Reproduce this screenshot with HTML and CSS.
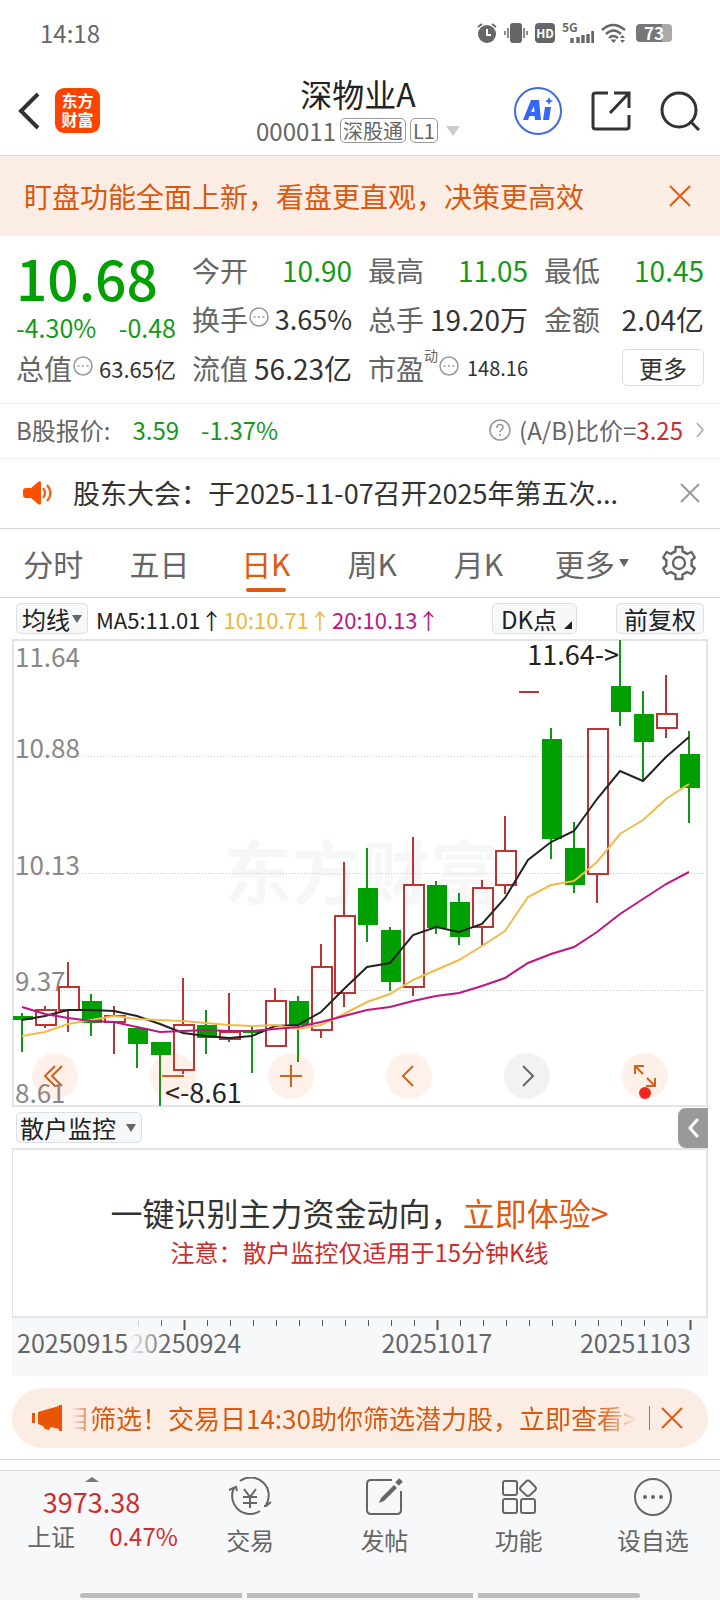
FILE: index.html
```html
<!DOCTYPE html>
<html lang="zh-CN">
<head>
  <meta charset="UTF-8">
  <meta name="viewport" content="width=device-width, initial-scale=1.0">
  <title>深物业A 000011</title>
  <link rel="stylesheet" href="styles.css">
</head>
<body>
  <div class="status-bar">
    <span class="time">14:18</span>
    <div class="status-icons">
      <svg width="20" height="20" viewBox="0 0 20 20"><circle cx="10" cy="11" r="9" fill="#666"/><path d="M1 4l4-3M19 4l-4-3" stroke="#666" stroke-width="2"/><path d="M10 6v6h4" fill="none" stroke="#fff" stroke-width="2"/></svg>
      <svg width="24" height="20" viewBox="0 0 24 20"><rect x="6" width="12" height="20" rx="3" fill="#666"/><path d="M1 8v4M4 5v10M20 5v10M23 8v4" stroke="#666" stroke-width="1.5"/></svg>
      <span class="hd">HD</span>
      <div class="signal">
        <span class="net">5G</span>
        <svg width="24" height="12" viewBox="0 0 24 12"><path d="M2 7v5M8 6v6M13 4v8M18 3v9M23 0v12" stroke="#666" stroke-width="3.4"/></svg>
      </div>
      <svg width="26" height="20" viewBox="0 0 26 20"><g fill="none" stroke="#666" stroke-width="2.4"><path d="M1 7Q12-3 24 7M5 11q7.500-7 15 0M8 15q4-4 9 0"/></g><path d="M9.500 16.500h6l-3 3.500zM19 15l2.500-3 2.500 3zM19 17h5l-2.500 3z" fill="#666"/></svg>
      <span class="battery">73</span>
    </div>
  </div>

  <header class="header">
    <div class="header-left">
      <button class="icon-btn" aria-label="返回"><svg width="24" height="38" viewBox="0 0 24 38"><path d="M22 2L5 19l17 17" fill="none" stroke="#333" stroke-width="4"/></svg></button>
      <a class="logo" href="#"><span>东方</span><span>财富</span></a>
    </div>
    <div class="stock">
      <h1>深物业A</h1>
      <div class="code">000011<span class="tag">深股通</span><span class="tag">L1</span><i class="arrow-light"></i></div>
    </div>
    <div class="header-right">
      <button class="icon-btn" aria-label="Ai">
        <svg width="48" height="48" viewBox="0 0 48 48"><circle cx="24" cy="24" r="23" fill="#fff" stroke="#3c6ae0" stroke-width="2"/><path d="M9 33L17 13h8l2 20h-6l-.5-4h-5L14 33zM17 25h3.500l-.5-6zM31 20h6l-2 13h-6z" fill="#3566f5"/><path d="M35 10l1.200 2.800L39 14l-2.800 1.200L35 18l-1.200-2.800L31 14l2.800-1.200z" fill="#3566f5"/></svg>
      </button>
      <button class="icon-btn" aria-label="分享">
        <svg width="40" height="40" viewBox="0 0 40 40" fill="none" stroke="#333" stroke-width="3"><path d="M17 2H4.500Q2 2 2 4.500V35.500Q2 38 4.500 38h31Q38 38 38 35.500V24"/><path d="M23 2h15v15M38 2L19 22"/></svg>
      </button>
      <button class="icon-btn" aria-label="搜索">
        <svg width="40" height="40" viewBox="0 0 40 40" fill="none" stroke="#333" stroke-width="3"><circle cx="19" cy="19" r="17"/><path d="M30 30l9 9"/></svg>
      </button>
    </div>
  </header>

  <div class="banner">
    <span>盯盘功能全面上新，看盘更直观，决策更高效</span>
    <button class="icon-btn" aria-label="关闭"><svg width="22" height="22" viewBox="0 0 22 22"><path d="M1 1l20 20M21 1L1 21" stroke="#e05a10" stroke-width="2"/></svg></button>
  </div>

  <section class="quote">
    <div class="price-box">
      <strong class="price">10.68</strong>
      <div class="change"><span>-4.30%</span><span>-0.48</span></div>
    </div>
    <div class="item"><span>今开</span><b class="green">10.90</b></div>
    <div class="item"><span>最高</span><b class="green">11.05</b></div>
    <div class="item"><span>最低</span><b class="green">10.45</b></div>
    <div class="item"><span>换手</span><svg class="dots" viewBox="0 0 20 20"><circle cx="10" cy="10" r="9"/><path d="M4.500 10h2M9 10h2M13.500 10h2"/></svg><b class="mid">3.65%</b></div>
    <div class="item"><span>总手</span><b>19.20万</b></div>
    <div class="item"><span>金额</span><b>2.04亿</b></div>
    <div class="item"><span>总值</span><svg class="dots" viewBox="0 0 20 20"><circle cx="10" cy="10" r="9"/><path d="M4.500 10h2M9 10h2M13.500 10h2"/></svg><b class="small">63.65亿</b></div>
    <div class="item"><span>流值</span><b>56.23亿</b></div>
    <div class="item"><span>市盈</span><sup>动</sup><svg class="dots" viewBox="0 0 20 20"><circle cx="10" cy="10" r="9"/><path d="M4.500 10h2M9 10h2M13.500 10h2"/></svg><b class="tiny">148.16</b></div>
    <div class="item"><button class="more">更多</button></div>
  </section>

  <a class="b-share" href="#">
    <span>B股报价:</span>
    <span class="green">3.59</span>
    <span class="green">-1.37%</span>
    <svg class="help" width="22" height="22" viewBox="0 0 22 22" fill="none" stroke="#999" stroke-width="1.6"><circle cx="11" cy="11" r="10"/><path d="M8 9q0-3.500 3-3.500t3 2.800q0 1.500-1.500 2.500T11 13.200M11 15v2"/></svg>
    <span>(A/B)比价=<em>3.25</em></span>
    <svg class="chevron" width="8" height="16" viewBox="0 0 8 16"><path d="M1 1l6 7-6 7" fill="none" stroke="#aaa" stroke-width="1.6"/></svg>
  </a>

  <div class="news">
    <svg width="30" height="24" viewBox="0 0 30 24"><path d="M3 7h5l7-6q3-2 3 1v20q0 3-3 1l-7-6H3q-3 0-3-3v-4q0-3 3-3z" fill="#ff5000"/><path d="M20 7q4 5 0 10M24 4q7 8 0 16" fill="none" stroke="#f26722" stroke-width="2.400"/></svg>
    <a href="#">股东大会：于2025-11-07召开2025年第五次...</a>
    <button class="icon-btn" aria-label="关闭"><svg width="20" height="20" viewBox="0 0 20 20"><path d="M1 1l18 18M19 1L1 19" stroke="#999" stroke-width="2"/></svg></button>
  </div>

  <nav class="tabs">
    <button>分时</button>
    <button>五日</button>
    <button class="active">日K</button>
    <button>周K</button>
    <button>月K</button>
    <button class="tab-more">更多<i class="arrow"></i></button>
    <button class="gear" aria-label="设置"><svg width="36" height="36" viewBox="0 0 36 36" fill="none" stroke="#666" stroke-width="2.400"><path d="M14.500 2h7v4.500q2.500.8 4.500 2.500l4.500-2 3.300 5.500-3.300 3q.5 2.500 0 5l3.300 3-3.300 5.500-4.500-2q-2 1.700-4.500 2.500V34h-7v-4.500Q12 28.700 10 27l-4.500 2-3.300-5.500 3.300-3q-.5-2.500 0-5l-3.300-3L5.500 7 10 9q2-1.700 4.500-2.500z" stroke-linejoin="round"/><circle cx="18" cy="18" r="6"/></svg></button>
  </nav>

  <div class="ma-bar">
    <button class="chip">均线<i class="arrow"></i></button>
    <div class="ma"><span>MA5:11.01↑</span><span class="ma10">10:10.71↑</span><span class="ma20">20:10.13↑</span></div>
    <button class="chip dk">DK点<svg width="8" height="8" viewBox="0 0 8 8"><path d="M8 0v8H0z" fill="#222"/></svg></button>
    <button class="chip">前复权</button>
  </div>

  <div class="chart">
    <svg class="kline" viewBox="12 639 696 468">
      <text class="watermark" x="223" y="899">东方财富</text>
      <path class="grid" d="M13 756.500H707M13 873.500H707M13 990.500H707"/>
      <rect class="frame" x="13" y="640" width="694" height="466"/>
      <g class="axis">
        <text x="15" y="667">11.64</text>
        <text x="15" y="758">10.88</text>
        <text x="15" y="875">10.13</text>
        <text x="15" y="991">9.37</text>
        <text x="15" y="1103">8.61</text>
      </g>
      <g id="candles"></g>
      <g id="lines"></g>
      <text class="mark" x="619" y="665" text-anchor="end">11.64-&gt;</text>
      <text class="mark" x="165" y="1103">&lt;-8.61</text>
    </svg>
    <div class="chart-tools">
      <button aria-label="最早"><svg width="26" height="24" viewBox="0 0 26 24"><path d="M13 2L3 12l10 10M20 2L10 12l10 10"/></svg></button>
      <button aria-label="缩小"><svg width="24" height="24" viewBox="0 0 24 24"><path d="M1 12h22"/></svg></button>
      <button aria-label="放大"><svg width="24" height="24" viewBox="0 0 24 24"><path d="M1 12h22M12 1v22"/></svg></button>
      <button aria-label="向左"><svg width="24" height="24" viewBox="0 0 24 24"><path d="M16 2L6 12l10 10"/></svg></button>
      <button class="disabled" aria-label="向右"><svg width="24" height="24" viewBox="0 0 24 24"><path d="M8 2l10 10L8 22"/></svg></button>
      <button class="full" aria-label="全屏"><svg width="24" height="24" viewBox="0 0 24 24"><path d="M2 10V2h9M2 2l8 8M22 14v8h-9M22 22l-8-8"/></svg></button>
    </div>
  </div>

  <div class="sub-bar">
    <button class="chip">散户监控<i class="arrow"></i></button>
    <button class="fold" aria-label="展开"><svg width="12" height="20" viewBox="0 0 12 20"><path d="M10 2L3 10l7 8" fill="none" stroke="#fff" stroke-width="3" stroke-linecap="round"/></svg></button>
  </div>

  <div class="panel">
    <p class="panel-title">一键识别主力资金动向，<a href="#">立即体验&gt;</a></p>
    <p class="panel-note">注意：散户监控仅适用于15分钟K线</p>
  </div>
  <svg class="dates" viewBox="12 1318 696 58">
    <defs>
      <linearGradient id="fade"><stop offset="0" stop-color="#f7f8fa"/><stop offset="1" stop-color="#f7f8fa" stop-opacity="0"/></linearGradient>
    </defs>
    <g id="ticks"></g>
    <text x="130" y="1353">20250924</text>
    <rect x="129" y="1320" width="38" height="40" fill="url(#fade)"/>
    <text x="17" y="1353">20250915</text>
    <text x="437" y="1353" text-anchor="middle">20251017</text>
    <text x="691" y="1353" text-anchor="end">20251103</text>
  </svg>

  <div class="promo">
    <svg width="32" height="28" viewBox="0 0 32 28"><path d="M0 9h3v10H0zM6 8L27 2V1h3v26h-3v-2l-8-2-2 3-4-1-2-3-5-2z" fill="#ea5504"/></svg>
    <a href="#"><span>目筛选！交易日14:30助你筛选潜力股，立即查看&gt;</span></a>
    <i class="divider"></i>
    <button class="icon-btn" aria-label="关闭"><svg width="22" height="22" viewBox="0 0 22 22"><path d="M1 1l20 20M21 1L1 21" stroke="#e05a10" stroke-width="2"/></svg></button>
  </div>

  <footer class="bottom">
    <nav class="bottom-nav">
      <a class="index" href="#">
        <i class="arrow-up"></i>
        <span class="index-value">3973.38</span>
        <span class="index-row"><span>上证</span><em>0.47%</em></span>
      </a>
      <a href="#">
        <svg width="44" height="40" viewBox="0 0 44 40"><path d="M12 4A18 18 0 0 1 38 28M32 34A18 18 0 0 1 6 11M1 13l7-3 1 4M36 29l2 0 5-4"/><path d="M16 12l6 8 6-8M15 20h14M15 26h14M22 20v11"/></svg>
        交易
      </a>
      <a href="#">
        <svg width="40" height="40" viewBox="0 0 40 40"><path d="M28 3H7Q3 3 3 7v26q0 4 4 4h26q4 0 4-4V14"/><path d="M15 26l2-5L30 8l3 3-13 13z" fill="#666" stroke="none"/><path d="M33 7l4-4" stroke-width="5"/></svg>
        发帖
      </a>
      <a href="#">
        <svg width="40" height="40" viewBox="0 0 40 40"><rect x="4" y="4" width="14" height="14" rx="2"/><rect x="4" y="22" width="14" height="14" rx="2"/><rect x="22" y="22" width="14" height="14" rx="2"/><path d="M27 4.500q2-2 4 0l5 5q2 2 0 4l-5 4.500q-2 2-4 0l-5-4.500q-2-2 0-4z"/></svg>
        功能
      </a>
      <a href="#">
        <svg width="40" height="40" viewBox="0 0 40 40"><circle cx="20" cy="20" r="18"/><g fill="#666" stroke="none"><circle cx="12" cy="20" r="2"/><circle cx="20" cy="20" r="2"/><circle cx="28" cy="20" r="2"/></g></svg>
        设自选
      </a>
    </nav>
    <div class="home-bar"><i></i><i></i><i></i></div>
  </footer>

  <script>
    // up/down, high, body top, body bottom, low
    const candles = [
      ['d', 1013, 1016, 1020, 1052], ['u', 1006, 1010, 1025, 1028], ['u', 962, 987, 1010, 1032],
      ['d', 994, 1001, 1023, 1036], ['u', 1006, 1016, 1022, 1054], ['d', 1027, 1028, 1044, 1068],
      ['d', 1042, 1042, 1055, 1106], ['u', 978, 1025, 1070, 1074], ['d', 1010, 1025, 1038, 1054],
      ['u', 993, 1032, 1039, 1042], ['d', 1027, 1031, 1033, 1073], ['u', 988, 1001, 1046, 1047],
      ['d', 996, 1001, 1025, 1062], ['u', 944, 967, 1030, 1038], ['u', 862, 916, 993, 1007],
      ['d', 848, 888, 925, 942], ['d', 927, 930, 982, 991], ['u', 837, 885, 987, 996],
      ['d', 881, 885, 928, 934], ['d', 893, 902, 937, 945], ['u', 880, 888, 927, 945],
      ['u', 816, 851, 885, 894], ['u', 692, 692, 692, 692], ['d', 728, 739, 839, 859],
      ['d', 822, 848, 885, 893], ['u', 729, 729, 874, 903], ['d', 640, 686, 712, 726],
      ['d', 691, 714, 742, 781], ['u', 675, 714, 728, 738], ['d', 731, 754, 788, 823]
    ];
    const averages = {
      ma5: [1020, 1016, 1010, 1010, 1011, 1016, 1024, 1033, 1036, 1038, 1036, 1026, 1025, 1012, 989, 967, 963, 935, 927, 932, 924, 898, 860, 842, 831, 799, 771, 781, 757, 737],
      ma10: [1036, 1032, 1024, 1020, 1016, 1019, 1020, 1021, 1023, 1025, 1026, 1025, 1029, 1025, 1014, 1002, 994, 980, 970, 960, 946, 931, 897, 885, 881, 862, 834, 820, 799, 784],
      ma20: [1007, 1014, 1018, 1021, 1022, 1027, 1032, 1031, 1030, 1031, 1031, 1029, 1027, 1022, 1016, 1010, 1007, 1001, 996, 993, 986, 978, 963, 954, 947, 932, 914, 899, 884, 872]
    };
    const x = i => 22 + 23 * i;

    document.getElementById('candles').innerHTML = candles.map(([type, high, top, bottom, low], i) => `
      <g class="${type}">
        <path d="M${x(i)} ${high}V${top}M${x(i)} ${bottom}V${low}"/>
        ${top === bottom ? `<path d="M${x(i) - 9} ${top}h20"/>` : `<rect x="${x(i) - 9}" y="${top}" width="20" height="${bottom - top}"/>`}
      </g>`).join('');

    document.getElementById('lines').innerHTML = Object.entries(averages).map(([name, values]) =>
      `<polyline class="${name}" points="${values.map((y, i) => x(i) + ',' + y).join(' ')}"/>`).join('');

    let ticks = '';
    for (let i = 5; i < 30; i++) {
      const long = i === 7 || i === 18 || i === 29;
      ticks += `<path d="M${x(i) + 1.5} 1320v${long ? 10 : 6}" stroke-width="${long ? 2 : 1}"/>`;
    }
    document.getElementById('ticks').innerHTML = ticks;
  </script>
</body>
</html>
```
FILE: styles.css
```css
* {
  box-sizing: border-box;
}

body {
  font-family: "Noto Sans CJK SC", sans-serif;
  font-size: 24px;
  line-height: 32px;
  color: #666;
  margin: 0;
  padding: 0;
  min-height: 100vh;
  display: flex;
  flex-direction: column;
  background: #fff;
}

button {
  font: inherit;
  color: inherit;
  background: none;
  border: none;
  margin: 0;
  padding: 0;
  cursor: pointer;
}

a {
  color: inherit;
  text-decoration: none;
}

em,
b {
  font-style: normal;
  font-weight: normal;
}

svg {
  display: block;
  flex-shrink: 0;
}

.green {
  color: #14991a;
}

.icon-btn {
  display: flex;
}

/* status bar */
.status-bar {
  display: flex;
  justify-content: space-between;
  align-items: center;
  height: 66px;
  padding: 0 48px 0 40px;
}

.status-icons {
  display: flex;
  align-items: center;
  gap: 7px;
}

.hd {
  width: 20px;
  height: 20px;
  border-radius: 4px;
  background: #666;
  color: #fff;
  font-size: 12px;
  font-weight: bold;
  line-height: 20px;
  text-align: center;
}

.signal {
  width: 32px;
  height: 20px;
  display: flex;
  flex-direction: column;
}

.signal .net {
  font-size: 12px;
  font-weight: bold;
  line-height: 8px;
}

.signal svg {
  align-self: flex-end;
}

.battery {
  width: 36px;
  height: 18px;
  margin-left: 2px;
  border-radius: 4px;
  background: linear-gradient(90deg, #777 73%, #aaa 73%);
  color: #fff;
  font-size: 17px;
  font-weight: bold;
  line-height: 18px;
  text-align: center;
}

/* header */
.header {
  display: grid;
  grid-template-columns: 1fr auto 1fr;
  align-items: center;
  height: 90px;
  padding: 0 20px 0 16px;
  border-bottom: 1px solid #d5d8d8;
}

.header-left,
.header-right {
  display: flex;
  align-items: center;
  gap: 15px;
}

.header-right {
  justify-content: flex-end;
  gap: 29px;
}

.logo {
  width: 45px;
  height: 45px;
  padding-top: 3px;
  border-radius: 9px;
  background: #ff4400;
  color: #fff;
  display: flex;
  flex-direction: column;
  align-items: center;
  font-size: 16px;
  font-weight: bold;
  line-height: 19px;
}

.stock {
  text-align: center;
}

.stock h1 {
  margin: 0;
  font-size: 32px;
  font-weight: normal;
  line-height: 40px;
  color: #222;
}

.code {
  display: flex;
  align-items: center;
  justify-content: center;
  gap: 4px;
  line-height: 36px;
}

.tag {
  border: 1px solid #999;
  border-radius: 5px;
  padding: 0 2px;
  font-size: 20px;
  line-height: 23px;
}

.arrow-light,
.arrow,
.arrow-up {
  border: 7px solid transparent;
  border-bottom: none;
  border-top: 10px solid #ccc;
  margin-left: 4px;
}

.arrow {
  border-width: 8px 5px 0;
  border-top-color: #666;
}

/* banner */
.banner {
  display: flex;
  justify-content: space-between;
  align-items: center;
  height: 80px;
  padding: 0 29px 0 24px;
  background: #fcede4;
  color: #d9590f;
  font-size: 28px;
}

/* quote */
.quote {
  display: grid;
  grid-template-columns: repeat(4, 1fr);
  grid-auto-rows: 49px;
  column-gap: 16px;
  padding: 9px 16px 11px;
  border-bottom: 1px solid #eee;
  font-size: 28px;
}

.price-box {
  grid-row: span 2;
  color: #00a000;
  white-space: nowrap;
}

.price {
  display: block;
  font-size: 55px;
  font-weight: 500;
  line-height: 64px;
}

.change {
  display: flex;
  justify-content: space-between;
  color: #14991a;
  font-size: 25px;
  line-height: 36px;
}

.item {
  display: flex;
  align-items: center;
  white-space: nowrap;
}

.item b,
.item .more {
  margin-left: auto;
}

.item b:not(.green) {
  color: #333;
}

.item .mid {
  font-size: 27px;
}

.item .small {
  font-size: 22px;
}

.item .tiny {
  font-size: 20px;
}

.item sup {
  align-self: flex-start;
  font-size: 14px;
  line-height: 24px;
}

.dots {
  width: 20px;
  height: 20px;
  margin: 0 0 4px 1px;
  fill: none;
  stroke: #999;
  stroke-width: 1.5;
}

.more {
  width: 82px;
  height: 37px;
  border: 1px solid #ddd;
  border-radius: 5px;
  color: #333;
  font-size: 24px;
  line-height: 32px;
}

/* b share */
.b-share {
  display: flex;
  align-items: center;
  height: 55px;
  padding: 0 16px 2px;
  border-bottom: 1px solid #eee;
}

.b-share .green {
  margin-left: 22px;
}

.b-share .help {
  margin-left: auto;
  margin-right: 8px;
}

.b-share em {
  color: #d02c2c;
}

.chevron {
  margin-left: 13px;
}

/* news */
.news {
  display: flex;
  align-items: center;
  height: 70px;
  padding: 0 20px 2px 23px;
  border-bottom: 1px solid #d5d5d5;
  color: #333;
  font-size: 27px;
}

.news a {
  flex: 1;
  margin-left: 20px;
}

/* tabs */
.tabs {
  display: grid;
  grid-template-columns: repeat(6, 1fr) 82px;
  height: 69px;
  border-bottom: 1px solid #d5d8d8;
  font-size: 30px;
}

.tabs button {
  display: flex;
  align-items: center;
  justify-content: center;
}

.tabs .active {
  position: relative;
  color: #e05a10;
}

.tabs .active::after {
  content: "";
  position: absolute;
  bottom: 5px;
  width: 40px;
  height: 4px;
  border-radius: 2px;
  background: #e05a10;
}

.tabs .tab-more {
  padding-left: 14px;
}

/* moving averages */
.ma-bar {
  display: flex;
  align-items: center;
  height: 41px;
  padding: 0 16px;
}

.chip {
  display: flex;
  align-items: center;
  height: 31px;
  padding: 0 5px;
  border: 1px solid #dcdfe3;
  border-radius: 5px;
  background: #f7f8fa;
  color: #222;
  line-height: 28px;
  white-space: nowrap;
}

.chip .arrow {
  margin-left: 2px;
}

.ma {
  display: flex;
  flex: 1;
  gap: 1px;
  margin-left: 8px;
  color: #222;
  font-size: 22px;
  white-space: nowrap;
}

.ma .ma10 {
  color: #efb73e;
}

.ma .ma20 {
  color: #bd1683;
}

.dk {
  margin-right: 39px;
  padding: 0 4px 0 8px;
}

.dk svg {
  align-self: flex-end;
  margin: 0 0 4px 7px;
}

.ma-bar .chip:last-child {
  padding: 0 7px;
}

/* chart */
.chart {
  position: relative;
  margin: 0 12px;
}

.kline,
.dates {
  width: 100%;
  overflow: visible;
}

.frame {
  fill: none;
  stroke: #e4e4e4;
  stroke-width: 2;
}

.grid {
  stroke: #ccc;
  stroke-dasharray: 1 2;
}

.watermark {
  fill: #f7f7f7;
  font-size: 69px;
  font-weight: 700;
}

.axis,
.mark {
  fill: #888;
  font-size: 26px;
}

.mark {
  fill: #222;
  font-size: 27px;
}

.u {
  fill: none;
  stroke: #be3432;
  stroke-width: 2;
}

.d {
  fill: #00a000;
}

.d path {
  stroke: #0f9812;
  stroke-width: 2;
}

polyline {
  fill: none;
  stroke-width: 2;
}

polyline.ma5 {
  stroke: #222;
}

polyline.ma10 {
  stroke: #efbb4b;
}

polyline.ma20 {
  stroke: #bd1683;
}

.chart-tools {
  position: absolute;
  left: 20px;
  right: 40px;
  bottom: 8px;
  display: flex;
  justify-content: space-between;
}

.chart-tools button {
  position: relative;
  width: 46px;
  height: 46px;
  border-radius: 50%;
  background: rgba(255, 90, 10, 0.09);
  display: flex;
  align-items: center;
  justify-content: center;
}

.chart-tools svg {
  fill: none;
  stroke: #d0611f;
  stroke-width: 2;
}

.chart-tools .disabled {
  background: rgba(0, 0, 0, 0.05);
}

.chart-tools .disabled svg {
  stroke: #666;
}

.full::after {
  content: "";
  position: absolute;
  bottom: 0;
  width: 12px;
  height: 12px;
  border-radius: 50%;
  background: #f32620;
}

/* sub chart */
.sub-bar {
  display: flex;
  justify-content: space-between;
  align-items: center;
  height: 41px;
  margin: 0 12px;
  padding-left: 4px;
}

.sub-bar .chip {
  padding: 0 5px 0 3px;
}

.sub-bar .arrow {
  margin-left: 10px;
}

.fold {
  width: 30px;
  height: 40px;
  border-radius: 8px 0 0 8px;
  background: #999;
  display: flex;
  align-items: center;
  justify-content: center;
}

.panel {
  margin: 0 12px;
  padding: 40px 0 46px;
  border: 2px solid #e4e4e4;
  border-left-width: 1px;
  text-align: center;
}

.panel p {
  margin: 0;
}

.panel-title {
  color: #333;
  font-size: 32px;
  line-height: 44px;
}

.panel-title a {
  color: #e05a10;
}

.panel-note {
  color: #d02c2c;
  line-height: 36px;
}

.dates {
  width: auto;
  margin: 0 12px;
  background: #f7f8fa;
  font-size: 25px;
  fill: #666;
}

#ticks {
  stroke: #555;
}

/* promo */
.promo {
  display: flex;
  align-items: center;
  height: 60px;
  margin: 12px 12px 11px;
  padding: 0 25px 0 20px;
  border-radius: 30px;
  background: #fcede4;
  color: #d9590f;
  font-size: 26px;
}

.promo a {
  flex: 1;
  margin-left: 8px;
  overflow: hidden;
  white-space: nowrap;
  -webkit-mask-image: linear-gradient(90deg, transparent, #000 24px, #000 calc(100% - 40px), transparent);
  mask-image: linear-gradient(90deg, transparent, #000 24px, #000 calc(100% - 40px), transparent);
}

.promo a span {
  margin-left: -8px;
}

.divider {
  width: 1px;
  height: 24px;
  margin: 0 11px;
  background: #c0703a;
}

/* bottom */
.bottom {
  flex: 1;
  display: flex;
  flex-direction: column;
  justify-content: space-between;
  border-top: 1px solid #d5d8d8;
  background: #f7f8fa;
}

.bottom::before {
  content: "";
  height: 10px;
  border-bottom: 1px solid #d5d8d8;
  background: #fff;
}

.bottom-nav {
  display: grid;
  grid-template-columns: 183px repeat(4, 1fr);
  flex: 1;
}

.bottom-nav a {
  display: flex;
  flex-direction: column;
  align-items: center;
  gap: 7px;
  padding-top: 6px;
}

.bottom-nav svg {
  fill: none;
  stroke: #666;
  stroke-width: 2;
}

.bottom-nav .index {
  gap: 2px;
}

.arrow-up {
  margin: 0;
  border-width: 0 7px 5px;
  border-bottom: 5px solid #777;
}

.index-value {
  padding-top: 2px;
  color: #d02c2c;
  font-size: 27px;
}

.index-row {
  display: flex;
  gap: 34px;
  padding-left: 22px;
}

.index-row em {
  color: #d02c2c;
}

.home-bar {
  display: flex;
  gap: 5px;
  padding: 0 80px 2px;
}

.home-bar i {
  flex: 162;
  height: 5px;
  border-radius: 3px 0 0 3px;
  background: #bbbcbe;
}

.home-bar i:nth-child(2) {
  flex: 226;
  border-radius: 0;
}

.home-bar i:last-child {
  border-radius: 0 3px 3px 0;
}
```
